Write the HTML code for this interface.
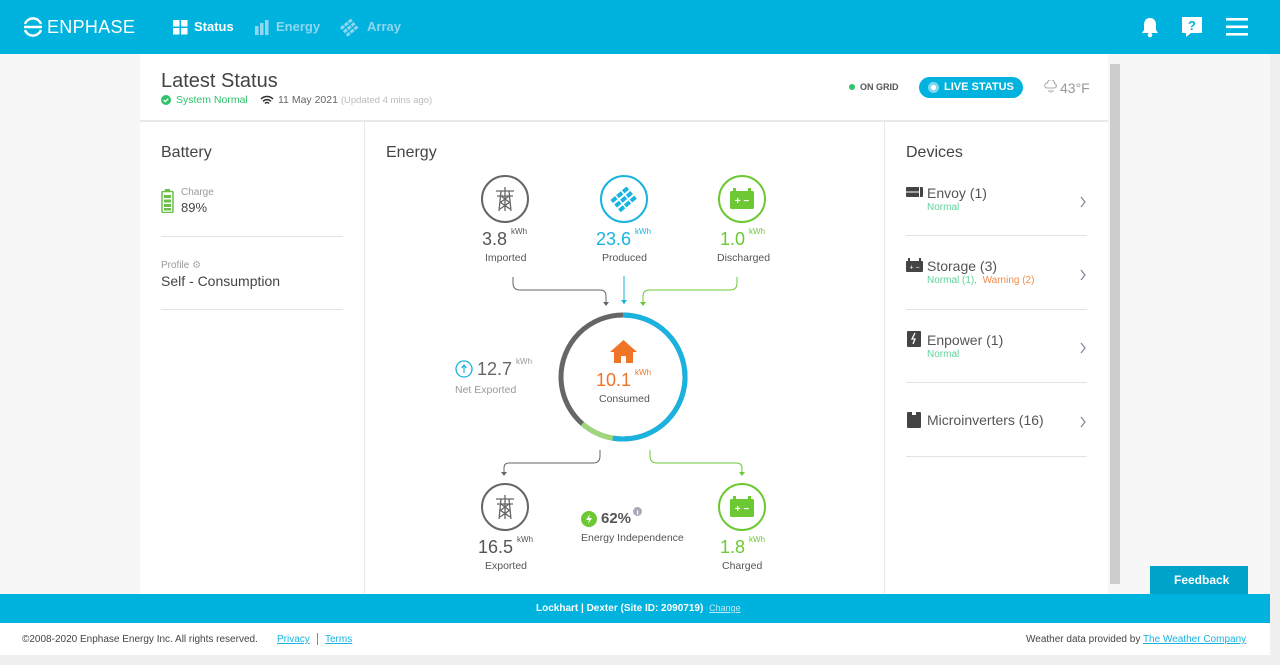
<!DOCTYPE html>
<html><head><meta charset="utf-8"><style>
*{box-sizing:border-box;margin:0;padding:0}
body{width:1280px;height:665px;overflow:hidden;font-family:"Liberation Sans",sans-serif;background:#f7f7f7;position:relative;color:#444}
.hdr{position:absolute;left:0;top:0;width:1280px;height:54px;background:#00b3df}
.a{position:absolute}
.w{color:#fff}
.panel{position:absolute;left:140px;top:54px;width:968px;height:540px;background:#fff}
.t{position:absolute;white-space:nowrap}
.n{font-size:18px;color:#555}
.u{font-size:8px;vertical-align:top;margin-left:4px;position:relative;top:-2px}
.lbl{font-size:10.5px;color:#555}
.ic{position:absolute;width:48px;height:48px;border-radius:50%;border:2px solid #666;background:#fff}
.hr{position:absolute;height:1px;background:#e2e2e2}
</style></head><body>
<div class="hdr">
 <svg class="a" style="left:22px;top:16px" width="22" height="22" viewBox="0 0 22 22"><path d="M3 8a8.5 8.5 0 0 1 16 0M2 11h18M3 14a8.5 8.5 0 0 0 16 0" fill="none" stroke="#fff" stroke-width="2.4"/></svg>
 <div class="t w" style="left:47px;top:17px;font-size:18px;letter-spacing:0.3px">ENPHASE</div>
 <svg class="a" style="left:173px;top:20px" width="15" height="15"><rect x="0" y="0" width="6.5" height="6.5" fill="#fff"/><rect x="8" y="0" width="6.5" height="6.5" fill="#fff"/><rect x="0" y="8" width="6.5" height="6.5" fill="#fff"/><rect x="8" y="8" width="6.5" height="6.5" fill="#fff"/></svg>
 <div class="t w" style="left:194px;top:19px;font-size:13px;font-weight:bold">Status</div>
 <svg class="a" style="left:255px;top:19px" width="16" height="16"><rect x="0" y="7" width="3.5" height="9" fill="#8fd6ee"/><rect x="5" y="4" width="3.5" height="12" fill="#8fd6ee"/><rect x="10" y="1" width="3.5" height="15" fill="#8fd6ee"/></svg>
 <div class="t" style="left:276px;top:19px;font-size:13px;font-weight:bold;color:#8fd6ee">Energy</div>
 <svg class="a" style="left:340px;top:17px" width="20" height="20" viewBox="0 0 20 20"><g fill="#8fd6ee" transform="rotate(-40 10 10)"><rect x="2" y="4" width="4" height="3"/><rect x="7" y="4" width="4" height="3"/><rect x="12" y="4" width="4" height="3"/><rect x="2" y="8.5" width="4" height="3"/><rect x="7" y="8.5" width="4" height="3"/><rect x="12" y="8.5" width="4" height="3"/><rect x="2" y="13" width="4" height="3"/><rect x="7" y="13" width="4" height="3"/><rect x="12" y="13" width="4" height="3"/></g></svg>
 <div class="t" style="left:367px;top:19px;font-size:13px;font-weight:bold;color:#8fd6ee">Array</div>
 <svg class="a" style="left:1140px;top:16px" width="20" height="22" viewBox="0 0 20 22"><path d="M10 2c-4 0-6 3-6 7v5l-2 3h16l-2-3V9c0-4-2-7-6-7z" fill="#fff"/><circle cx="10" cy="19" r="2.3" fill="#fff"/></svg>
 <svg class="a" style="left:1181px;top:16px" width="22" height="22" viewBox="0 0 22 22"><path d="M1 1h20v16H10l-5 4v-4H1z" fill="#fff"/><text x="11" y="14" font-size="13" font-weight="bold" text-anchor="middle" fill="#00b3df" font-family="Liberation Sans">?</text></svg>
 <svg class="a" style="left:1226px;top:17px" width="22" height="20"><rect y="1" width="22" height="2.6" fill="#fff"/><rect y="8.5" width="22" height="2.6" fill="#fff"/><rect y="16" width="22" height="2.6" fill="#fff"/></svg>
</div>
<div class="a" style="left:1270px;top:54px;width:10px;height:601px;background:#f0f0f0"></div>
<div class="a" style="left:1110px;top:64px;width:10px;height:520px;background:#cdcdcd"></div>
<div class="panel">
 <div class="t" style="left:21px;top:16px;font-size:20px;color:#444">Latest Status</div>
 <svg class="a" style="left:21px;top:41px" width="10" height="10"><circle cx="5" cy="5" r="5" fill="#2ec36a"/><path d="M2.6 5l1.7 1.7 3-3" stroke="#fff" stroke-width="1.3" fill="none"/></svg>
 <div class="t" style="left:36px;top:40px;font-size:10.5px;color:#2ec36a">System Normal</div>
 <svg class="a" style="left:120px;top:41px" width="14" height="11" viewBox="0 0 14 11"><path d="M1 4a8.5 8.5 0 0 1 12 0M3 6.3a5.5 5.5 0 0 1 8 0M5 8.5a2.6 2.6 0 0 1 4 0" stroke="#333" stroke-width="1.5" fill="none"/></svg>
 <div class="t" style="left:138px;top:40px;font-size:10.5px;color:#666">11 May 2021 <span style="color:#bbb;font-size:9.5px">(Updated 4 mins ago)</span></div>
 <svg class="a" style="left:709px;top:30px" width="6" height="6"><circle cx="3" cy="3" r="3" fill="#2ec36a"/></svg>
 <div class="t" style="left:720px;top:28px;font-size:9px;font-weight:bold;color:#555">ON GRID</div>
 <div class="a" style="left:779px;top:23px;width:104px;height:21px;border-radius:11px;background:#00b3df"></div>
 <svg class="a" style="left:788px;top:28px" width="11" height="11"><circle cx="5.5" cy="5.5" r="5.5" fill="#7fd8ef"/><circle cx="5.5" cy="5.5" r="2.6" fill="#fff"/></svg>
 <div class="t w" style="left:804px;top:27px;font-size:11px;font-weight:bold">LIVE STATUS</div>
 <svg class="a" style="left:904px;top:26px" width="14" height="14" viewBox="0 0 14 14"><path d="M3 8a2.5 2.5 0 0 1 .5-5 3.5 3.5 0 0 1 7 .5 2.3 2.3 0 0 1 0 4.5z" fill="none" stroke="#aaa" stroke-width="1.1"/><path d="M5 10v2M7 10v3M9 10v2" stroke="#aaa" stroke-width="1"/></svg>
 <div class="t" style="left:920px;top:26px;font-size:14px;color:#999">43°F</div>
 <div class="hr" style="left:0;top:66px;width:968px;background:#e8e8e8;height:2px"></div>
 <div class="a" style="left:224px;top:66px;width:1px;height:474px;background:#e8e8e8"></div>
 <div class="a" style="left:744px;top:66px;width:1px;height:474px;background:#e8e8e8"></div>

 <div class="t" style="left:21px;top:90px;font-size:16px;color:#444">Battery</div>
 <svg class="a" style="left:21px;top:135px" width="13" height="24"><rect x="4" y="0" width="5" height="3" fill="#6cc04a"/><rect x="1" y="2.5" width="11" height="21" rx="1" fill="none" stroke="#6cc04a" stroke-width="1.5"/><rect x="3" y="6" width="7" height="3" fill="#6cc04a"/><rect x="3" y="10.5" width="7" height="3" fill="#6cc04a"/><rect x="3" y="15" width="7" height="3" fill="#6cc04a"/><rect x="3" y="19" width="7" height="2.5" fill="#6cc04a"/></svg>
 <div class="t" style="left:41px;top:133px;font-size:10px;color:#999">Charge</div>
 <div class="t" style="left:41px;top:146px;font-size:13px;color:#444">89%</div>
 <div class="hr" style="left:21px;top:182px;width:182px"></div>
 <div class="t" style="left:21px;top:206px;font-size:10px;color:#999">Profile <span style="color:#aaa">⚙</span></div>
 <div class="t" style="left:21px;top:219px;font-size:14px;color:#444">Self - Consumption</div>
 <div class="hr" style="left:21px;top:255px;width:182px"></div>

 <div class="t" style="left:246px;top:90px;font-size:16px;color:#444">Energy</div>
</div>
<div class="ic" style="left:481px;top:175px"></div>
<svg class="a" style="left:494px;top:186px" width="22" height="26" viewBox="0 0 22 26" fill="none" stroke="#666" stroke-width="1.3"><path d="M2 5h18M3 10h16M11 1v24M7 5l-2 20M15 5l2 20M6 16l10 7M16 16L6 23M7 10l8 6M15 10l-8 6"/></svg>
<div class="ic" style="left:600px;top:175px;border-color:#1ab3df"></div>
<svg class="a" style="left:610px;top:185px" width="28" height="28" viewBox="0 0 28 28"><g fill="#1ab3df" transform="rotate(-40 14 14)"><rect x="3" y="6" width="6" height="4"/><rect x="10.5" y="6" width="6" height="4"/><rect x="18" y="6" width="6" height="4"/><rect x="3" y="12" width="6" height="4"/><rect x="10.5" y="12" width="6" height="4"/><rect x="18" y="12" width="6" height="4"/><rect x="3" y="18" width="6" height="4"/><rect x="10.5" y="18" width="6" height="4"/><rect x="18" y="18" width="6" height="4"/></g></svg>
<div class="ic" style="left:718px;top:175px;border-color:#6cc933"></div>
<svg class="a" style="left:729px;top:187px" width="26" height="24" viewBox="0 0 26 24"><rect x="4" y="1" width="3" height="4" fill="#6cc933"/><rect x="19" y="1" width="3" height="4" fill="#6cc933"/><rect x="1" y="4" width="24" height="18" rx="1.5" fill="#6cc933"/><text x="13" y="17" font-size="10" font-weight="bold" fill="#fff" text-anchor="middle" font-family="Liberation Sans">+ −</text></svg>
<div class="t n" style="left:482px;top:229px">3.8<span class="u">kWh</span></div>
<div class="t lbl" style="left:485px;top:252px">Imported</div>
<div class="t n" style="left:596px;top:229px;color:#1ab3df">23.6<span class="u">kWh</span></div>
<div class="t lbl" style="left:602px;top:252px">Produced</div>
<div class="t n" style="left:720px;top:229px;color:#6cc933">1.0<span class="u">kWh</span></div>
<div class="t lbl" style="left:717px;top:252px">Discharged</div>
<svg class="a" style="left:0;top:0" width="1280" height="665" fill="none" stroke-width="1">
 <path d="M513 277v6q0 7 7 7h80q6 0 6 6v8" stroke="#666"/><path d="M603 302l3 4 3-4z" fill="#666" stroke="none"/>
 <path d="M624 276v28" stroke="#1ab3df"/><path d="M621 300l3 4 3-4z" fill="#1ab3df" stroke="none"/>
 <path d="M737 277v6q0 7 -7 7h-80q-7 0 -7 6v8" stroke="#6cc933"/><path d="M640 302l3 4 3-4z" fill="#6cc933" stroke="none"/>
 <path d="M600 450v6q0 7-7 7h-84q-5 0-5 5v6" stroke="#666"/><path d="M501 472l3 4 3-4z" fill="#666" stroke="none"/>
 <path d="M650 450v6q0 7 7 7h79q6 0 6 5v6" stroke="#6cc933"/><path d="M739 472l3 4 3-4z" fill="#6cc933" stroke="none"/>
 <g transform="rotate(-90 623 377)">
  <circle cx="623" cy="377" r="62" stroke="#666" stroke-width="5"/>
  <circle cx="623" cy="377" r="62" stroke="#1ab3df" stroke-width="5" stroke-dasharray="205 400"/>
  <circle cx="623" cy="377" r="62" stroke="#9fd67d" stroke-width="5" stroke-dasharray="0 205 34 400"/>
 </g>
 <circle cx="464" cy="369" r="8" stroke="#1ab3df" stroke-width="1.3"/>
 <path d="M464 373v-7M461.5 368l2.5-3 2.5 3" stroke="#1ab3df" stroke-width="1.2"/>
</svg>
<svg class="a" style="left:609px;top:339px" width="29" height="25" viewBox="0 0 29 25"><path d="M14.5 1L1 13h4v11h7v-7h5v7h7V13h4z" fill="#f07426"/></svg>
<div class="t n" style="left:596px;top:370px;color:#f07426">10.1<span class="u">kWh</span></div>
<div class="t lbl" style="left:599px;top:393px">Consumed</div>
<div class="t n" style="left:477px;top:359px;color:#666">12.7<span class="u" style="color:#999">kWh</span></div>
<div class="t lbl" style="left:455px;top:384px;color:#999">Net Exported</div>
<div class="ic" style="left:481px;top:483px"></div>
<svg class="a" style="left:494px;top:494px" width="22" height="26" viewBox="0 0 22 26" fill="none" stroke="#666" stroke-width="1.3"><path d="M2 5h18M3 10h16M11 1v24M7 5l-2 20M15 5l2 20M6 16l10 7M16 16L6 23M7 10l8 6M15 10l-8 6"/></svg>
<div class="t n" style="left:478px;top:537px">16.5<span class="u">kWh</span></div>
<div class="t lbl" style="left:485px;top:560px">Exported</div>
<div class="ic" style="left:718px;top:483px;border-color:#6cc933"></div>
<svg class="a" style="left:729px;top:495px" width="26" height="24" viewBox="0 0 26 24"><rect x="4" y="1" width="3" height="4" fill="#6cc933"/><rect x="19" y="1" width="3" height="4" fill="#6cc933"/><rect x="1" y="4" width="24" height="18" rx="1.5" fill="#6cc933"/><text x="13" y="17" font-size="10" font-weight="bold" fill="#fff" text-anchor="middle" font-family="Liberation Sans">+ −</text></svg>
<div class="t n" style="left:720px;top:537px;color:#6cc933">1.8<span class="u">kWh</span></div>
<div class="t lbl" style="left:722px;top:560px">Charged</div>
<svg class="a" style="left:581px;top:511px" width="16" height="16"><circle cx="8" cy="8" r="8" fill="#6cc933"/><path d="M9 3L5 9h3l-1 4 4-6H8z" fill="#fff"/></svg>
<div class="t" style="left:601px;top:510px;font-size:15px;font-weight:bold;color:#555">62%</div>
<svg class="a" style="left:633px;top:507px" width="9" height="9"><circle cx="4.5" cy="4.5" r="4.5" fill="#aab"/><rect x="4" y="3.5" width="1.2" height="4" fill="#fff"/></svg>
<div class="t lbl" style="left:581px;top:532px">Energy Independence</div>

<div class="t" style="left:906px;top:144px;font-size:16px;color:#444">Devices</div>
<svg class="a" style="left:906px;top:187px" width="17" height="10"><rect width="17" height="10" rx="1" fill="#444"/><rect x="0" y="4.5" width="13" height="1" fill="#fff"/><rect x="13" y="0" width="1" height="10" fill="#fff"/></svg>
<div class="t" style="left:927px;top:185px;font-size:14px;color:#555">Envoy (1)</div>
<div class="t" style="left:927px;top:202px;font-size:10px;color:#5fd39a">Normal</div>
<div class="hr" style="left:906px;top:235px;width:181px"></div>
<svg class="a" style="left:906px;top:258px" width="17" height="14"><rect x="2" y="0" width="2" height="3" fill="#444"/><rect x="13" y="0" width="2" height="3" fill="#444"/><rect y="3" width="17" height="11" rx="1" fill="#444"/><text x="8.5" y="11.5" font-size="7" fill="#fff" text-anchor="middle" font-family="Liberation Sans">+ −</text></svg>
<div class="t" style="left:927px;top:258px;font-size:14px;color:#555">Storage (3)</div>
<div class="t" style="left:927px;top:275px;font-size:10px;color:#5fd39a">Normal (1), <span style="color:#f58a4b">&nbsp;Warning (2)</span></div>
<div class="hr" style="left:906px;top:309px;width:181px"></div>
<svg class="a" style="left:907px;top:331px" width="14" height="16"><rect width="14" height="16" rx="1" fill="#444"/><path d="M8 2L5 8h3l-2 5" stroke="#fff" stroke-width="1.3" fill="none"/></svg>
<div class="t" style="left:927px;top:332px;font-size:14px;color:#555">Enpower (1)</div>
<div class="t" style="left:927px;top:349px;font-size:10px;color:#5fd39a">Normal</div>
<div class="hr" style="left:906px;top:382px;width:181px"></div>
<svg class="a" style="left:907px;top:412px" width="14" height="16"><rect width="14" height="16" rx="1" fill="#444"/><rect x="5" y="0" width="4" height="3" fill="#fff"/></svg>
<div class="t" style="left:927px;top:412px;font-size:14px;color:#555">Microinverters (16)</div>
<div class="hr" style="left:906px;top:456px;width:181px"></div>
<svg class="a" style="left:1079px;top:196px" width="8" height="250" fill="none" stroke="#889" stroke-width="1.3"><path d="M2 1l4 5-4 5M2 74l4 5-4 5M2 147l4 5-4 5M2 221l4 5-4 5"/></svg>

<div class="a" style="left:1150px;top:566px;width:98px;height:28px;background:#00a3c9"></div>
<div class="t w" style="left:1174px;top:573px;font-size:12px;font-weight:bold">Feedback</div>
<div class="a" style="left:0;top:594px;width:1270px;height:29px;background:#00b3df"></div>
<div class="t w" style="left:536px;top:603px;font-size:10px;font-weight:bold">Lockhart | Dexter (Site ID: 2090719) <span style="font-weight:normal;font-size:9px;color:#bdeaf7;text-decoration:underline;margin-left:3px">Change</span></div>
<div class="a" style="left:0;top:623px;width:1270px;height:32px;background:#fff"></div>
<div class="t" style="left:22px;top:634px;font-size:10px;color:#444">©2008-2020 Enphase Energy Inc. All rights reserved.</div>
<div class="t" style="left:277px;top:634px;font-size:10px;color:#1ab3df;text-decoration:underline">Privacy</div>
<div class="a" style="left:317px;top:633px;width:1px;height:12px;background:#1ab3df"></div>
<div class="t" style="left:325px;top:634px;font-size:10px;color:#1ab3df;text-decoration:underline">Terms</div>
<div class="t" style="left:1026px;top:634px;font-size:10px;color:#444">Weather data provided by <span style="color:#1ab3df;text-decoration:underline">The Weather Company</span></div>
<div class="a" style="left:0;top:655px;width:1280px;height:10px;background:#f0f0f0"></div>
</body></html>
